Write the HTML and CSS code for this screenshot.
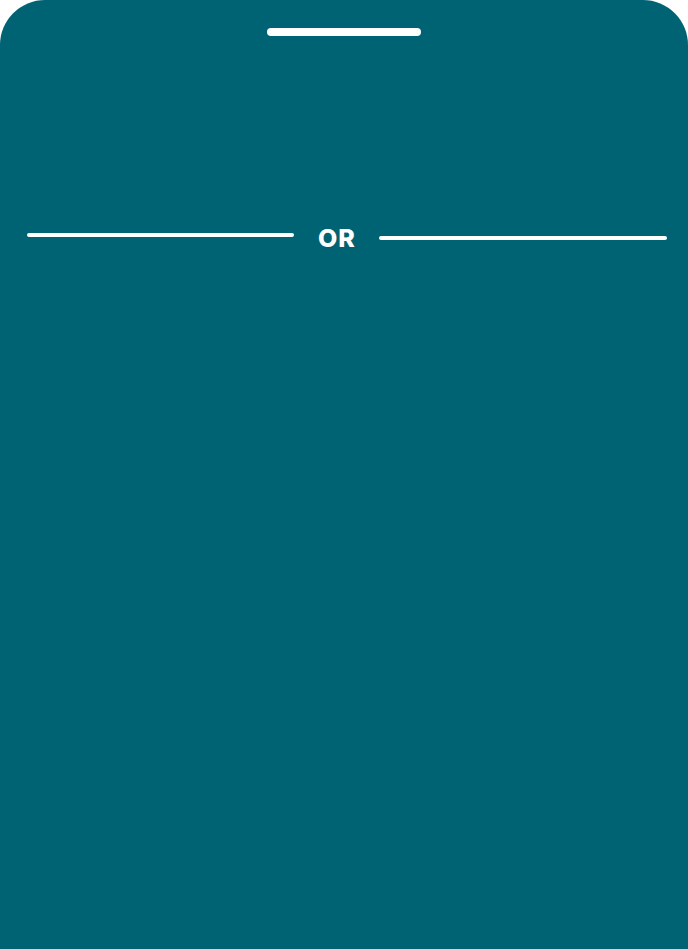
FILE: index.html
```html
<!DOCTYPE html>
<html>
<head>
<meta charset="utf-8">
<link rel="stylesheet" href="styles.css">
</head>
<body>
<div class="sheet">
  <div class="handle"></div>
  <div class="divider">
    <span class="line line-left"></span>
    <span class="or">OR</span>
    <span class="line line-right"></span>
  </div>
</div>
</body>
</html>
```

FILE: styles.css
```css
html, body {
  margin: 0;
  padding: 0;
  background: #ffffff;
}
.sheet {
  width: 688px;
  height: 949px;
  background: #006374;
  border-radius: 45px 45px 0 0;
  padding-top: 28px;
  box-sizing: border-box;
  display: flex;
  flex-direction: column;
  align-items: center;
}
.handle {
  width: 154px;
  height: 8px;
  border-radius: 4px;
  background: #ffffff;
}
.divider {
  margin-top: 189px;
  width: 100%;
  box-sizing: border-box;
  padding-left: 27px;
  display: flex;
  align-items: flex-start;
}
.line {
  display: block;
  flex: none;
  height: 4px;
  border-radius: 2px;
  background: #ffffff;
}
.line-left {
  width: 267px;
  margin-top: 8px;
}
.line-right {
  width: 288px;
  margin-top: 11px;
}
.or {
  flex: none;
  width: 37px;
  font-family: "Inter", "Lato", sans-serif;
  font-weight: 800;
  font-size: 25px;
  line-height: 24px;
  letter-spacing: 1px;
  color: #ffffff;
  margin: 1px 24px 0 24px;
  white-space: nowrap;
}
```
